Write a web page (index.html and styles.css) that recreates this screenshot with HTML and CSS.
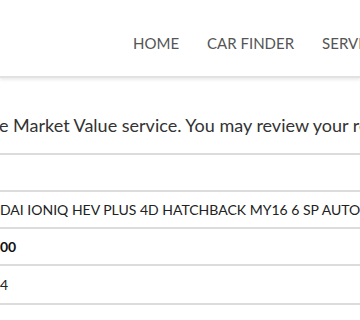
FILE: index.html
```html
<!DOCTYPE html>
<html lang="en">

<head>
  <meta charset="utf-8">
  <meta content="width=device-width, initial-scale=1.0" name="viewport">
  <title>Market Value</title>
  <link rel="stylesheet" href="styles.css">
</head>

<body>
  <header class="site-header">
    <a class="logo" href="#"></a>
    <nav class="main-nav">
      <a href="#">HOME</a>
      <a href="#">CAR FINDER</a>
      <a href="#">SERVICES</a>
    </nav>
  </header>
  <div class="content">
    <p class="intro">e Market Value service. You may review your report below.</p>
    <table class="report">
      <tr>
        <td>&nbsp;</td>
      </tr>
      <tr>
        <td>DAI IONIQ HEV PLUS 4D HATCHBACK MY16 6 SP AUTOMATED MANUAL</td>
      </tr>
      <tr>
        <td><b>00</b></td>
      </tr>
      <tr>
        <td class="last">4</td>
      </tr>
    </table>
  </div>
</body>

</html>
```

FILE: styles.css
```css
*,
*::before,
*::after {
  box-sizing: border-box;
}

body {
  margin: 0;
  background: #fff;
  font-family: "Lato", "Open Sans", sans-serif;
  color: #2b2b2b;
  overflow: hidden;
}

.site-header {
  display: flex;
  align-items: center;
  height: 78px;
  border-bottom: 2px solid #e2e2e2;
  box-shadow: 0 2px 3px rgba(0, 0, 0, 0.08);
  white-space: nowrap;
}

.logo {
  flex: none;
  width: 133px;
}

.main-nav {
  display: flex;
  gap: 28px;
  padding-top: 10px;
}

.main-nav a {
  color: #555;
  text-decoration: none;
  font-size: 15px;
}

.content {
  padding-top: 35px;
  white-space: nowrap;
}

.intro {
  margin: 0 0 0 -1px;
  font-size: 18px;
  line-height: 24px;
  color: #333;
}

.report {
  width: 100%;
  margin-top: 16px;
  border-collapse: collapse;
  font-size: 14px;
  color: #222;
}

.report td {
  height: 37px;
  padding: 0;
  border-top: 2px solid #dcdcdc;
  border-bottom: 2px solid #dcdcdc;
}

.report td.last {
  height: 39px;
}

.report b {
  color: #111;
}
```
